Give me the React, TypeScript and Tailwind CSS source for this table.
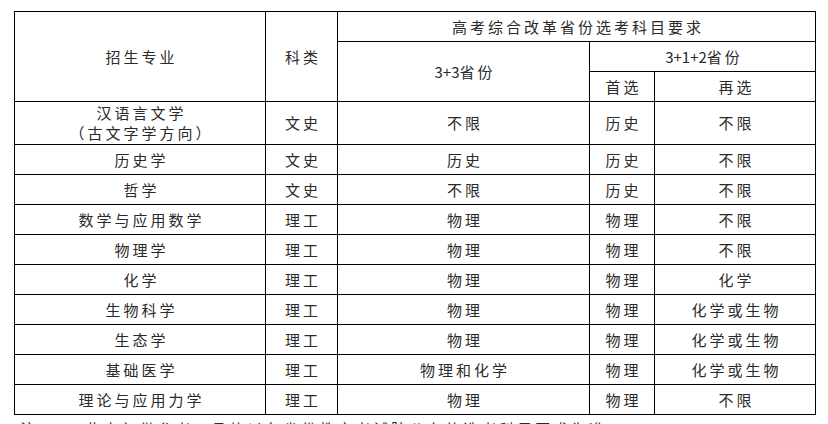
const rows: [string, string, string, string, string][] = [
  ["历史学", "文史", "历史", "历史", "不限"],
  ["哲学", "文史", "不限", "历史", "不限"],
  ["数学与应用数学", "理工", "物理", "物理", "不限"],
  ["物理学", "理工", "物理", "物理", "不限"],
  ["化学", "理工", "物理", "物理", "化学"],
  ["生物科学", "理工", "物理", "物理", "化学或生物"],
  ["生态学", "理工", "物理", "物理", "化学或生物"],
  ["基础医学", "理工", "物理和化学", "物理", "化学或生物"],
  ["理论与应用力学", "理工", "物理", "物理", "不限"],
]

const cell = "border border-black text-center align-middle p-0 pl-[3px]"

export default function App() {
  return (
    <div
      className="w-[828px] h-[424px] overflow-hidden bg-white pl-[14px] pt-[11px] text-[15px] leading-[20px] tracking-[3px] text-[#2a2a2a]"
      style={{ fontFamily: '"Noto Sans CJK SC", "Liberation Sans", sans-serif' }}
    >
      <table className="border-collapse table-fixed w-[801px]">
        <colgroup>
          <col className="w-[251px]" />
          <col className="w-[72px]" />
          <col className="w-[252px]" />
          <col className="w-[65px]" />
          <col className="w-[161px]" />
        </colgroup>
        <tbody>
          {/* header */}
          <tr className="h-[30px]">
            <td rowSpan={3} className={cell}>招生专业</td>
            <td rowSpan={3} className={cell}>科类</td>
            <td colSpan={3} className={cell}>高考综合改革省份选考科目要求</td>
          </tr>
          <tr className="h-[30px]">
            <td rowSpan={2} className={cell}>
              <span className="tracking-normal">3+3</span>省份
            </td>
            <td colSpan={2} className={cell}>
              <span className="tracking-normal">3+1+2</span>省份
            </td>
          </tr>
          <tr className="h-[30px]">
            <td className={cell}>首选</td>
            <td className={cell}>再选</td>
          </tr>

          <tr className="h-[43px]">
            <td className={cell}>
              <div>汉语言文学</div>
              <div>（古文字学方向）</div>
            </td>
            <td className={cell}>文史</td>
            <td className={cell}>不限</td>
            <td className={cell}>历史</td>
            <td className={cell}>不限</td>
          </tr>

          {rows.map((r) => (
            <tr key={r[0]} className="h-[30px]">
              {r.map((c, i) => (
                <td key={i} className={cell}>{c}</td>
              ))}
            </tr>
          ))}
        </tbody>
      </table>
      <p className="mt-[4px] pl-[6px] whitespace-nowrap">
        注：1．此表仅供参考，具体以各省份教育考试院公布的选考科目要求为准。
      </p>
    </div>
  )
}
